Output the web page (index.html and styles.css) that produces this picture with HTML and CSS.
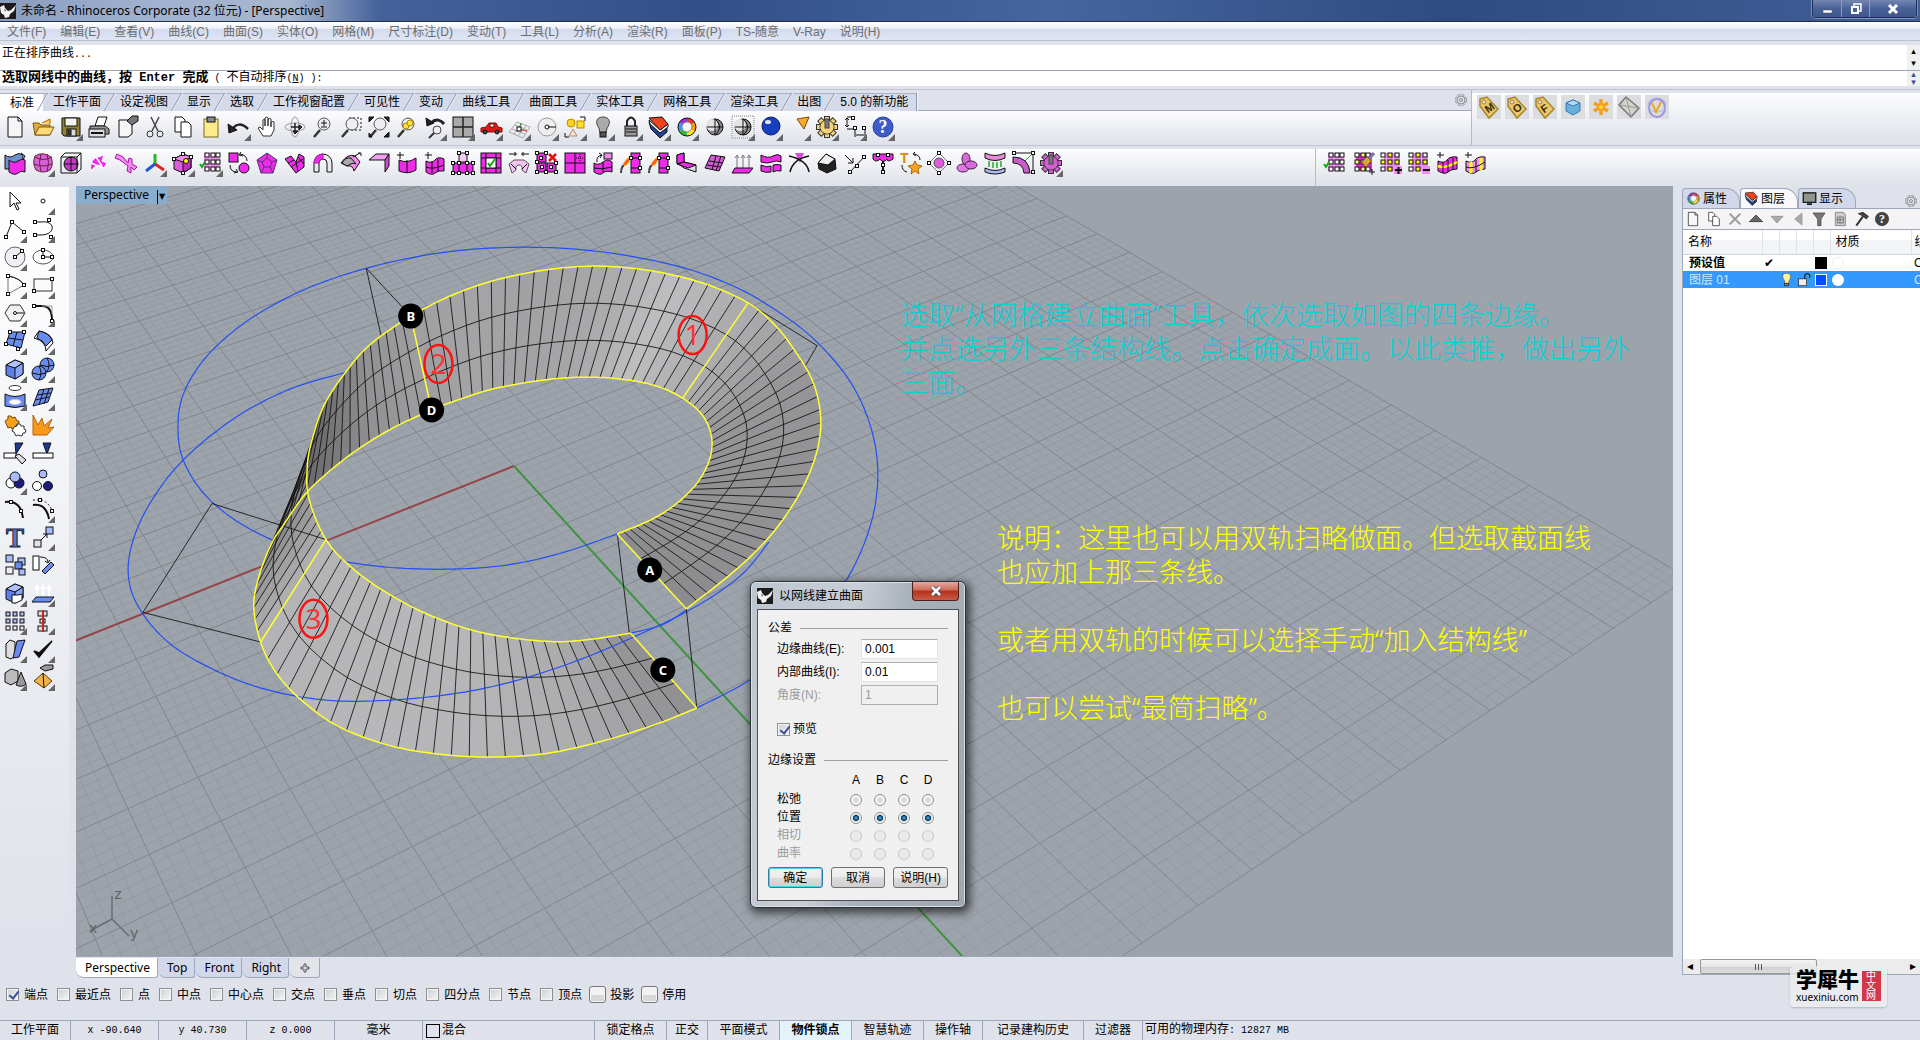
FILE: index.html
```html
<!DOCTYPE html>
<html lang="zh-CN">
<head>
  <meta charset="UTF-8">
  <title>未命名 - Rhinoceros Corporate (32 位元) - [Perspective]</title>
  <link rel="stylesheet" href="styles.css">
</head>
<body>
  <header class="titlebar">
    <svg class="logo" viewBox="0 0 16 16"><rect width="16" height="16" fill="#1b1b1b"/><path d="M0 4l4-2 1 3 3 3 3-1 5-5-2 6-4 3-1 3-4 1-1-3-3-2z" fill="#f2f2f2"/><path d="M4 6l2 1-1 2z" fill="#555"/></svg>
    <h1>未命名 - Rhinoceros Corporate (32 位元) - [Perspective]</h1>
    <div class="window-buttons">
      <button aria-label="最小化"><svg viewBox="0 0 12 12"><rect x="2" y="7" width="9" height="3" fill="#fff" stroke="#444" stroke-width=".5"/></svg></button>
      <button aria-label="还原"><svg viewBox="0 0 12 12"><path d="M4 3V1h7v7H9" fill="none" stroke="#fff" stroke-width="1.5"/><rect x="2" y="4" width="6" height="6" fill="none" stroke="#fff" stroke-width="2"/></svg></button>
      <button class="wide" aria-label="关闭"><svg viewBox="0 0 12 12"><path d="M2 2l8 8M10 2l-8 8" stroke="#fff" stroke-width="3"/></svg></button>
    </div>
  </header>

  <nav class="menu">
    <a href="#">文件(F)</a><a href="#">编辑(E)</a><a href="#">查看(V)</a><a href="#">曲线(C)</a><a href="#">曲面(S)</a><a href="#">实体(O)</a><a href="#">网格(M)</a><a href="#">尺寸标注(D)</a><a href="#">变动(T)</a><a href="#">工具(L)</a><a href="#">分析(A)</a><a href="#">渲染(R)</a><a href="#">面板(P)</a><a href="#">TS-随意</a><a href="#">V-Ray</a><a href="#">说明(H)</a>
  </nav>

  <section class="command">
    <div class="history"><span>正在排序曲线<small>...</small></span><i class="spin"><b>▴</b><b>▾</b></i></div>
    <div class="prompt"><span><strong>选取网线中的曲线，按<span class="key"> Enter </span>完成</strong><small> ( </small>不自动排序<small>(<u>N</u>) ):</small></span><i class="spin blue"><b>▴</b><b>▾</b></i></div>
  </section>

  <section class="dock-row first">
    <div class="dock grow">
      <div class="ribbon-tabs">
        <button class="on">标准</button><button>工作平面</button><button>设定视图</button><button>显示</button><button>选取</button><button>工作视窗配置</button><button>可见性</button><button>变动</button><button>曲线工具</button><button>曲面工具</button><button>实体工具</button><button>网格工具</button><button>渲染工具</button><button>出图</button><button class="last">5.0 的新功能</button>
        <svg class="gear" viewBox="0 0 14 14"><circle cx="7" cy="7" r="5.5" stroke-dasharray="3 1.3"/><circle cx="7" cy="7" r="4"/><circle cx="7" cy="7" r="1.5"/></svg>
      </div>
      <div class="tools" id="standardTools"></div>
    </div>
    <div class="dock side-top"><div class="tools tiles" id="vrayTools"></div></div>
  </section>

  <section class="dock-row second">
    <div class="dock grow"><div class="tools" id="tsTools"></div></div>
    <div class="dock side-bottom"><div class="tools" id="selectTools"></div></div>
  </section>

  <main>
    <aside class="toolbox" id="toolbox"></aside>

    <section class="workspace">
      <div class="viewport">
        <svg class="scene" id="scene"></svg>
        <button class="view-title">Perspective<span>▼</span></button>

        <p class="note cyan">选取“从网格建立曲面”工具，依次选取如图的四条边缘。
并点选另外三条结构线。点击确定成面。以此类推，做出另外
三面。</p>
        <p class="note yellow">说明：这里也可以用双轨扫略做面。但选取截面线
也应加上那三条线。

或者用双轨的时候可以选择手动“加入结构线”

也可以尝试“最简扫略”。</p>

        <form class="dialog">
          <div class="dialog-title">
            <svg class="logo" viewBox="0 0 16 16"><rect width="16" height="16" fill="#1b1b1b"/><path d="M0 4l4-2 1 3 3 3 3-1 5-5-2 6-4 3-1 3-4 1-1-3-3-2z" fill="#f2f2f2"/><path d="M4 6l2 1-1 2z" fill="#555"/></svg>
            <h2>以网线建立曲面</h2>
            <button type="button" class="close" aria-label="关闭"><svg viewBox="0 0 12 12"><path d="M2 2l8 8M10 2l-8 8" stroke="#445" stroke-width="4"/><path d="M2 2l8 8M10 2l-8 8" stroke="#fff" stroke-width="2.5"/></svg></button>
          </div>
          <div class="dialog-body">
            <h3>公差</h3>
            <div class="field"><label for="edge">边缘曲线(E):</label><input type="text" id="edge" value="0.001"></div>
            <div class="field"><label for="inner">内部曲线(I):</label><input type="text" id="inner" value="0.01"></div>
            <div class="field off"><label for="angle">角度(N):</label><input type="text" id="angle" value="1" disabled></div>
            <label class="preview"><input type="checkbox" checked>预览</label>
            <h3>边缘设置</h3>
            <table class="edges">
              <thead><tr><td></td><th>A</th><th>B</th><th>C</th><th>D</th></tr></thead>
              <tbody id="edgeRows"></tbody>
            </table>
            <div class="actions">
              <button type="button" class="default">确定</button>
              <button type="button">取消</button>
              <button type="button">说明(H)</button>
            </div>
          </div>
        </form>
      </div>
      <div class="view-tabs">
        <button class="on">Perspective</button><button>Top</button><button>Front</button><button>Right</button><button class="add" aria-label="新增"><svg viewBox="0 0 10 10"><path d="M4 1h2v3h3v2H6v3H4V6H1V4h3z" fill="none" stroke="#555"/></svg></button>
      </div>
    </section>

    <aside class="panel">
      <div class="panel-tabs">
        <button><i data-icon="wheel"></i>属性</button>
        <button class="on"><i data-icon="layers"></i>图层</button>
        <button><i data-icon="monitor"></i>显示</button>
        <svg class="gear" viewBox="0 0 14 14"><circle cx="7" cy="7" r="5.5" stroke-dasharray="3 1.3"/><circle cx="7" cy="7" r="4"/><circle cx="7" cy="7" r="1.5"/></svg>
      </div>
      <div class="panel-tools" id="panelTools"></div>
      <div class="layer-list">
        <table>
          <thead><tr><th class="name">名称</th><th></th><th></th><th></th><th></th><th class="mat">材质</th><th class="cut">线型</th></tr></thead>
          <tbody>
            <tr class="current"><td>预设值</td><td class="tick">✔</td><td></td><td></td><td><i class="swatch black"></i></td><td><i class="ball faint"></i></td><td class="cut">Continuous</td></tr>
            <tr class="selected"><td>图层 01</td><td></td><td><i data-icon="lamp"></i></td><td><i data-icon="unlock"></i></td><td><i class="swatch"></i></td><td><i class="ball"></i></td><td class="cut">Continuous</td></tr>
          </tbody>
        </table>
      </div>
      <div class="scrollbar"><span>◂</span><div class="thumb"><b></b></div><span class="right">▸</span></div>
      <div class="watermark">
        <div><strong>学犀牛</strong><small>xuexiniu.com</small></div>
        <em>中文网</em>
      </div>
    </aside>
  </main>

  <section class="osnap">
    <label><input type="checkbox" checked>端点</label>
    <label><input type="checkbox">最近点</label>
    <label><input type="checkbox">点</label>
    <label><input type="checkbox">中点</label>
    <label><input type="checkbox">中心点</label>
    <label><input type="checkbox">交点</label>
    <label><input type="checkbox">垂点</label>
    <label><input type="checkbox">切点</label>
    <label><input type="checkbox">四分点</label>
    <label><input type="checkbox">节点</label>
    <label><input type="checkbox">顶点</label>
    <label class="push"><input type="checkbox">投影</label>
    <label class="push"><input type="checkbox">停用</label>
  </section>

  <footer class="status">
    <span class="plane">工作平面</span><span class="coord mono">x -90.640</span><span class="coord mono">y 40.730</span><span class="coord mono">z 0.000</span><span class="coord">毫米</span><span class="layer"><i></i>混合</span><span class="four">锁定格点</span><span class="two">正交</span><span class="four">平面模式</span><span class="four active">物件锁点</span><span class="four">智慧轨迹</span><span class="three">操作轴</span><span class="six">记录建构历史</span><span class="three">过滤器</span><span class="memory">可用的物理内存<small>: 12827 MB</small></span>
  </footer>

  <script src="script.js"></script>
</body>
</html>
```
FILE: styles.css
```css
* {
  box-sizing: border-box;
}

body {
  margin: 0;
  min-height: 100vh;
  display: flex;
  flex-direction: column;
  background: #dfe2ea;
  color: #000;
  font-family: "Liberation Sans", "Noto Sans CJK SC", sans-serif;
  font-size: 12px;
  line-height: 16px;
  overflow: hidden;
}

button, input {
  font: inherit;
  color: inherit;
}

button {
  border: 0;
  padding: 0;
  background: none;
}

h1, h2, h3, p {
  margin: 0;
  font-weight: normal;
}

i, em {
  font-style: normal;
}

svg {
  display: block;
}

a {
  color: inherit;
  text-decoration: none;
}

/* title bar */
.titlebar {
  height: 22px;
  display: flex;
  align-items: center;
  padding-right: 3px;
  background: linear-gradient(90deg, #8a9cbc 0, #9fb2d0 150px, #a7b6cf 290px, #44619a 380px, #324f88 700px, #46659f 1050px, #2f4b80 1450px, #415f98 100%);
  border-bottom: 1px solid #1f2c4c;
}

.logo {
  width: 16px;
  height: 16px;
}

.titlebar h1 {
  flex: 1;
  margin-left: 5px;
  font-family: "Noto Sans", "Noto Sans CJK SC", sans-serif;
  font-size: 12px;
}

.window-buttons {
  display: flex;
  align-self: flex-start;
  border: 1px solid #1f2f55;
  border-top: 0;
  border-radius: 0 0 4px 4px;
  box-shadow: 0 0 0 1px #7f92b8;
}

.window-buttons button {
  width: 28px;
  height: 17px;
  display: flex;
  align-items: center;
  justify-content: center;
  background: linear-gradient(#7487b0, #4a6298 50%, #3d568e);
}

.window-buttons button + button {
  border-left: 1px solid #8a9cc0;
}

.window-buttons .wide {
  width: 47px;
}

.window-buttons svg {
  width: 12px;
  height: 12px;
}

/* menu and command line */
.menu {
  height: 19px;
  display: flex;
  gap: 14px;
  padding-left: 7px;
  line-height: 21px;
  color: #6d6d6d;
  background: linear-gradient(#fff, #eef1f9 35%, #d4dbee 40%, #dfe5f5);
  border-bottom: 1px solid #b9c0d2;
}

.command {
  margin-top: 4px;
  background: #fff;
  font-family: "Liberation Mono", "Noto Sans CJK SC", monospace;
}

.command small {
  font-size: 10px;
  white-space: pre;
}

.history, .prompt {
  display: flex;
  justify-content: space-between;
}

.history {
  height: 26px;
  padding-left: 2px;
  line-height: 18px;
  border-bottom: 1px solid #9ea6b8;
}

.prompt {
  height: 15px;
  line-height: 13px;
  padding-left: 2px;
}

.prompt strong {
  font-size: 13px;
}

.prompt .key {
  font-size: 12px;
}

.spin {
  width: 13px;
  display: flex;
  flex-direction: column;
  justify-content: space-around;
  background: #f0f0f0;
}

.spin b {
  font: 9px/7px "DejaVu Sans", sans-serif;
  text-align: center;
}

.spin.blue {
  color: #33539c;
}

/* toolbars */
.dock-row {
  display: flex;
}

.first {
  margin-top: 3px;
  height: 57px;
  border-top: 1px solid #bfc4cf;
  border-bottom: 1px solid #bfc4cf;
}

.second {
  padding-top: 3px;
  height: 40px;
}

.dock {
  display: flex;
  flex-direction: column;
}

.grow {
  flex: 1;
}

.side-top {
  flex: none;
  width: 449px;
  padding-top: 3px;
  border-left: 1px solid #b3bacb;
}

.side-bottom {
  flex: none;
  width: 605px;
  border-left: 1px solid #b3bacb;
}

.ribbon-tabs {
  display: flex;
  height: 21px;
  padding-top: 3px;
  border-bottom: 1px solid #9ea8bc;
}

.ribbon-tabs button {
  position: relative;
  height: 18px;
  padding: 0 9px 0 10px;
  line-height: 17px;
  background: #d5daea;
  border-top: 1px solid #a9b1c4;
}

.ribbon-tabs button::after {
  content: "";
  position: absolute;
  z-index: 1;
  right: 0;
  top: -1px;
  width: 1px;
  height: 18px;
  background: #8f98ac;
  transform: skewX(-30deg);
  box-shadow: 1px 0 0 #f2f4f9;
}

.ribbon-tabs .on {
  height: 19px;
  background: #fff;
}

.ribbon-tabs .last::after {
  transform: none;
}

.gear {
  width: 14px;
  height: 14px;
  margin-left: auto;
  margin-right: 3px;
  fill: none;
  stroke: #8b8b8b;
}

.tools {
  flex: 1;
  display: flex;
  align-items: flex-start;
  padding: 2px 0 0 1px;
  background: linear-gradient(#fdfdfe, #e0e3ea 90%);
}

.second .tools {
  padding-top: 0;
}

.tool {
  flex: none;
  width: 28px;
  height: 28px;
  padding: 1px 2px;
}

.side-top .tools, .side-bottom .tools {
  padding-left: 5px;
}

.tiles {
  gap: 4px;
}

.tiles .tool {
  width: 24px;
  height: 24px;
  padding: 0;
  background: #dcdde0;
}

.tool svg {
  width: 24px;
  height: 24px;
  overflow: visible;
}

.tool text {
  stroke: none;
}

/* main area */
main {
  flex: 1;
  display: flex;
}

.toolbox {
  flex: none;
  width: 69px;
  margin: 1px 7px 23px 0;
  padding-left: 1px;
  display: grid;
  grid-template-columns: 28px 28px;
  grid-auto-rows: 28px;
  align-content: start;
  background: linear-gradient(#fff, #e2e5ec 85%, #dfe2ea);
}

.workspace {
  flex: 1;
  display: flex;
  flex-direction: column;
}

.viewport {
  flex: 1;
  position: relative;
  overflow: hidden;
  background: #9da3ab;
}

.scene {
  position: absolute;
  width: 100%;
  height: 100%;
}

.view-title {
  position: absolute;
  left: 0;
  top: 0;
  height: 18px;
  padding-left: 8px;
  background: #8aadcc;
  font-family: "Noto Sans", sans-serif;
}

.view-title span {
  display: inline-block;
  margin-left: 8px;
  padding: 0 2px 0 1px;
  border-left: 1px solid #000;
  font: 8px/14px "DejaVu Sans", sans-serif;
}

.note {
  position: absolute;
  white-space: pre;
  font: 300 27px/34px "Noto Sans", "Noto Sans CJK SC", sans-serif;
}

.cyan {
  left: 825px;
  top: 112px;
  color: #0ccfd6;
}

.yellow {
  left: 921px;
  top: 335px;
  color: #ff0;
}

.grid-minor {
  stroke: #949aa2;
}

.grid-major {
  stroke: #83858c;
}

.mesh {
  stroke: #111;
  stroke-opacity: 0.85;
  fill: none;
}

.rail {
  stroke: #ff3;
  stroke-width: 1.5;
  fill: none;
}

.circle {
  stroke: #2450f0;
  stroke-width: 1.2;
  fill: none;
}

.dot-label {
  font: bold 13px "Noto Sans", sans-serif;
  fill: #fff;
  text-anchor: middle;
}

.mark {
  font: 28px "Noto Sans", sans-serif;
  fill: #f33;
  text-anchor: middle;
}

.axis-label {
  font: 14px "Liberation Mono", monospace;
  fill: #5c5e62;
}

/* dialog */
.dialog {
  position: absolute;
  left: 674px;
  top: 395px;
  width: 216px;
  padding: 0 6px 6px;
  border: 1px solid #2b2f36;
  border-radius: 6px;
  background: linear-gradient(100deg, #bdc5cf, #c8ced6 40%, #a8b0ba 60%, #9fa7b1);
  box-shadow: 0 0 0 1px #dde2e8 inset, 2px 3px 9px 2px rgba(0,0,0,0.6);
}

.dialog-title {
  height: 27px;
  display: flex;
  align-items: center;
}

.dialog-title h2 {
  flex: 1;
  margin-left: 6px;
  font-size: 12px;
}

.close {
  align-self: flex-start;
  width: 47px;
  height: 19px;
  display: flex;
  align-items: center;
  justify-content: center;
  border: 1px solid #51201b;
  border-top: 0;
  border-radius: 0 0 4px 4px;
  background: linear-gradient(#e5a79c, #cf6a5a 45%, #b5301c 50%, #cb5b45);
}

.close svg {
  width: 12px;
  height: 12px;
}

.dialog-body {
  padding: 10px 10px 12px;
  border: 1px solid #4a4f58;
  background: #f0f0f0;
}

.dialog h3 {
  display: flex;
  align-items: center;
  gap: 8px;
  font-size: 12px;
  line-height: 16px;
}

.dialog h3::after {
  content: "";
  flex: 1;
  height: 1px;
  background: #a0a0a0;
}

.field {
  display: flex;
  align-items: center;
  justify-content: space-between;
  padding: 0 10px 0 9px;
  margin-top: 3px;
}

.field input {
  width: 77px;
  height: 20px;
  padding: 0 3px;
  border: 1px solid #e2e3ea;
  border-top-color: #abadb3;
  background: #fff;
}

.off {
  color: #9b9b9b;
}

.off input {
  border-color: #afafaf;
  background: #f0f0f0;
}

.preview {
  display: flex;
  align-items: center;
  gap: 3px;
  margin: 16px 0 15px 9px;
}

input[type=checkbox] {
  appearance: none;
  position: relative;
  width: 13px;
  height: 13px;
  margin: 0;
  border: 1px solid #8e8f8f;
  background: linear-gradient(135deg, #cbcfd5, #f6f6f6);
  box-shadow: inset 0 0 0 1px #f4f4f4;
}

input[type=checkbox]:checked::after {
  content: "";
  position: absolute;
  left: 4px;
  top: 0;
  width: 4px;
  height: 8px;
  border: solid #3c4f9c;
  border-width: 0 2px 2px 0;
  transform: rotate(38deg);
}

.edges {
  width: 100%;
  margin-top: 2px;
  border-collapse: collapse;
}

.edges th, .edges td {
  width: 24px;
  height: 18px;
  padding: 0;
  line-height: 16px;
  font-weight: normal;
  text-align: center;
}

.edges thead td, .edges tbody th {
  width: auto;
  padding-left: 9px;
  text-align: left;
}

.edges tr > :last-child {
  width: 32px;
  padding-right: 8px;
}

.edges thead td, .edges thead th {
  height: 20px;
}

.edges input {
  appearance: none;
  display: block;
  width: 12px;
  height: 12px;
  margin: 2px auto 0;
  border: 1px solid #8e8f8f;
  border-radius: 50%;
  background: radial-gradient(#d8dade 25%, #f8f8f8 60%);
}

.edges input:checked {
  background: radial-gradient(#2a9ad0 10%, #0c3350 38%, #f4f4f4 52%);
}

.edges input:disabled {
  border-color: #c4c4c4;
  background: #ebebeb;
}

.actions {
  display: flex;
  gap: 8px;
  margin-top: 5px;
}

.actions button {
  flex: 1;
  height: 21px;
  border: 1px solid #707070;
  border-radius: 3px;
  white-space: nowrap;
  background: linear-gradient(#f2f2f2, #ebebeb 50%, #dddddd 50%, #cfcfcf);
}

.actions .default {
  border-color: #2c7fa8;
  box-shadow: inset 0 0 0 1px #47d3f5;
}

/* viewport tabs */
.view-tabs {
  display: flex;
  height: 22px;
  padding-top: 1px;
  border-top: 1px solid #9ea8bc;
  font-family: "Noto Sans", sans-serif;
}

.view-tabs button {
  position: relative;
  height: 20px;
  padding: 0 7px 0 9px;
  line-height: 18px;
  background: #d2d8ea;
  border: solid #9ea8bc;
  border-width: 0 1px 1px 0;
  border-radius: 0 0 3px 8px;
}

.view-tabs .on {
  background: #fff;
}

.view-tabs .add {
  width: 31px;
  padding-left: 11px;
  background: #e2e4ea;
}

.add svg {
  width: 10px;
  height: 10px;
}

/* layer panel */
.panel {
  position: relative;
  flex: none;
  width: 238px;
  margin: 0 0 3px 9px;
  display: flex;
  flex-direction: column;
}

.panel-tabs {
  display: flex;
  align-items: flex-end;
  height: 22px;
}

.panel-tabs button {
  display: flex;
  align-items: center;
  gap: 2px;
  height: 20px;
  width: 58px;
  padding-left: 3px;
  border: 1px solid #9ea8bc;
  border-bottom: 0;
  border-radius: 4px 14px 0 0;
  background: #d2d8ea;
  white-space: nowrap;
}

.panel-tabs .on {
  background: #f8f8fa;
}

.panel-tabs i svg {
  width: 15px;
  height: 15px;
}

.panel-tabs .gear {
  margin-right: 2px;
}

.panel-tools {
  display: flex;
  height: 22px;
  border: solid #9ea8bc;
  border-width: 1px 0 1px 1px;
  background: #f4f4f6;
}

.panel-tools .tool {
  width: 21px;
  height: 20px;
  padding: 2px;
}

.panel-tools svg {
  width: 16px;
  height: 16px;
}

.layer-list {
  flex: 1;
  border-left: 1px solid #9ea8bc;
  background: #fff;
  overflow: hidden;
}

.layer-list table {
  width: 100%;
  table-layout: fixed;
  border-collapse: collapse;
}

.layer-list th, .layer-list td {
  width: 17px;
  height: 17px;
  padding: 0;
  text-align: left;
  font-weight: normal;
  line-height: 16px;
}

.layer-list th {
  height: 24px;
  border-right: 1px solid #e0e2e6;
  border-bottom: 1px solid #d0d4da;
  background: linear-gradient(#fff 40%, #f3f4f6 45%);
}

.layer-list .name {
  width: 79px;
  padding-left: 5px;
}

.layer-list .mat {
  width: 81px;
  padding-left: 5px;
}

.layer-list .cut {
  width: 9px;
  padding-left: 3px;
  overflow: hidden;
  white-space: nowrap;
}

.layer-list td:first-child {
  padding-left: 6px;
}

.current td:first-child {
  font-weight: bold;
}

.layer-list .tick {
  padding-left: 2px;
  font-family: "DejaVu Sans", sans-serif;
}

.selected {
  color: #cfe8ff;
  background: #3399ff;
}

.layer-list td svg {
  width: 15px;
  height: 15px;
}

.swatch {
  display: block;
  width: 12px;
  height: 12px;
  margin-left: 2px;
  border: 1px solid #fff;
  background: #0050ff;
}

.swatch.black {
  border-color: #000;
  background: #000;
}

.ball {
  display: block;
  width: 12px;
  height: 12px;
  margin-left: 2px;
  border-radius: 50%;
  background: #fff;
}

.faint {
  border: 1px solid #eee;
}

.scrollbar {
  display: flex;
  height: 16px;
  padding: 0 4px;
  border: solid #9ea8bc;
  border-width: 0 0 1px 1px;
  background: #ececec;
  line-height: 15px;
}

.scrollbar .right {
  margin-left: auto;
}

.thumb {
  width: 117px;
  height: 15px;
  margin-left: 7px;
  padding-top: 4px;
  border: 1px solid #979797;
  border-radius: 2px;
  background: linear-gradient(#f4f4f4, #e6e6e6 50%, #cfcfcf 50%, #dcdcdc);
}

.thumb b {
  display: block;
  width: 8px;
  height: 6px;
  margin: 0 auto;
  background: repeating-linear-gradient(90deg, #555 0 1px, transparent 1px 3px);
}

.watermark {
  position: absolute;
  right: 33px;
  bottom: -32px;
  display: flex;
  align-items: center;
  gap: 3px;
  padding: 2px 6px 4px;
  border-radius: 4px;
  background: rgba(236,238,240,0.8);
  box-shadow: 0 1px 2px rgba(0,0,0,0.2);
}

.watermark strong, .watermark small {
  display: block;
}

.watermark strong {
  font-size: 21px;
  line-height: 23px;
  font-weight: 900;
}

.watermark small {
  font: 10px/12px "Noto Sans", sans-serif;
}

.watermark em {
  width: 19px;
  padding: 0 4px;
  background: #d23848;
  color: #fff;
  font-size: 10px;
  line-height: 10px;
}

/* bottom bars */
.osnap {
  display: flex;
  gap: 9px;
  height: 42px;
  padding: 8px 0 0 6px;
}

.osnap label {
  display: flex;
  align-items: center;
  gap: 5px;
  height: 17px;
}

.osnap .push {
  gap: 4px;
  margin-left: -2px;
}

.osnap .push input {
  width: 17px;
  height: 17px;
  border: 1px solid #777;
  border-radius: 3px;
  background: linear-gradient(#f2f2f2 50%, #d8d8d8 50%);
}

.status {
  display: flex;
  height: 20px;
  border-top: 1px solid #9ea8bc;
  line-height: 19px;
}

.status span {
  border-right: 1px solid #9ea8bc;
  text-align: center;
}

.mono, .memory {
  font-family: "Liberation Mono", "Noto Sans CJK SC", monospace;
}

.mono, .memory small {
  font-size: 10px;
}

.plane { width: 71px; }
.coord { width: 88px; }
.two { width: 41px; }
.three { width: 59px; }
.four { width: 72px; }
.six { width: 101px; }

.status .layer {
  width: 172px;
  display: flex;
  align-items: center;
  padding-left: 3px;
}

.layer i {
  width: 14px;
  height: 14px;
  margin-right: 2px;
  border: 1px solid #000;
}

.active {
  background: #e4f2fc;
  font-weight: bold;
}

.status .memory {
  border-right: 0;
  padding-left: 2px;
}
```
FILE: script.js
```js
// ---------- icons, all on a 24 x 24 grid ----------
const PINK = '#ee2be6', ROSE = '#f08cf0', BLUE = '#6a8cf0', SKY = '#a9bcf7';

const path = (d, fill = 'none', stroke = '#111', w = 1) =>
  `<path d="${d}" fill="${fill}" stroke="${stroke}" stroke-width="${w}"/>`;
const circ = (x, y, r, fill = 'none', stroke = '#111') =>
  `<circle cx="${x}" cy="${y}" r="${r}" fill="${fill}" stroke="${stroke}"/>`;
const rect = (x, y, w, h, fill = 'none', stroke = '#111') =>
  `<rect x="${x}" y="${y}" width="${w}" height="${h}" fill="${fill}" stroke="${stroke}"/>`;
const knots = (...pts) => pts.map(p => rect(p[0] - 1.5, p[1] - 1.5, 3, 3, '#fff')).join('');

function lattice(cols, rows, fill, first = '#fff', mid = '#fff') {
  let s = rect(5, 2, 16, 18, fill, 'none');
  cols.forEach((x, i) => rows.forEach((y, j) => {
    s += rect(x, y, 4, 4, i === 1 || j === 1 ? mid : first);
  }));
  return s;
}

const cube = (fill, top, side) =>
  path('M3 8l9-5 8 3v11l-8 5-9-4z', fill) + path('M3 8l9-5 8 3-8 5z', top) + path('M12 11l8-5v11l-8 5z', side);
const lens = path('M9 15l-6 7', 'none', '#333', 2.5) + circ(13, 9, 6, '#eceef0', '#555');
const page = path('M5 2h10l4 4v16H5z', '#f6f6f6') + path('M15 2v4h4');
const gearShape = (fill) => {
  let s = '';
  for (let a = 0; a < 360; a += 45) s += `<rect x="9.5" y="1.5" width="5" height="6" fill="${fill}" stroke="#333" transform="rotate(${a} 12 12)"/>`;
  return s + circ(12, 12, 7, fill, '#333') + circ(12, 12, 6, fill, fill) + rect(10, 4, 4, 9, '#777', '#444');
};
const ball = (light, dark) =>
  circ(12, 12, 8, dark) + circ(9, 10, 6, light, 'none') + path('M12 4v16M4 12h16M12 4c6 5 6 11 0 16');
const tag = (t) => path('M3 4l7-2 11 12-9 9L3 11z', '#e9c76a', '#a8862c', 1.5) + circ(7, 7, 2, '#dcdde0', '#a8862c') +
  `<text x="8" y="17" font-size="11" font-weight="bold" font-family="Liberation Sans" fill="#3a2c08" transform="rotate(-35 12 13)">${t}</text>`;
const wheel = ['#e33', '#f90', '#fe2', '#3b3', '#39f', '#93c'].map((c, i) =>
  `<path d="M12 12V3A9 9 0 0 1 19.8 7.5z" fill="${c}" transform="rotate(${i * 60} 12 12)"/>`).join('') +
  circ(12, 12, 5, '#f4f5f8', '#888') + circ(12, 12, 9);
const layers = path('M2 7l11 11 7-6v5l-7 6L4 14z', '#1c3f98') + path('M2 5l11 10 8-6v3l-8 6L3 9z', '#fff') + path('M2 3l13-1 6 7-8 6z', '#f0421c');

const icons = {
  page, layers, wheel,
  open: path('M2 8h6l2 2h9v10H4z', '#e0aa38', '#7a5510') + path('M4 20l4-8h15l-4 8z', '#ffd978', '#7a5510') + path('M11 8l8-4v5', '#ffc64a', '#a07010'),
  save: path('M3 3h18v18H5l-2-2z', '#8f8238') + rect(6, 3, 12, 8, '#f4f4ee') + rect(8, 14, 9, 7, '#ddd') + rect(9, 15, 3, 5, '#444'),
  print: path('M8 11l3-9h9l-3 9z', '#fff') + path('M3 11h15l4 3v5H3z', '#999') + rect(2, 14, 16, 8, '#ddd') + path('M4 18h12', 'none', '#111', 2),
  note: path('M4 5h13v14l-4 3H4z', '#f6f6f6') + path('M12 6l5-5h6v5l-6 4z', '#777'),
  cut: path('M8 2l7 14M16 2L9 16', 'none', '#444', 1.5) + circ(7, 19, 3, 'none', '#333') + circ(17, 19, 3, 'none', '#333'),
  copy: path('M4 2h7l3 3v12H4z', '#fff') + path('M10 7h7l3 3v12H10z', '#fff'),
  paste: rect(5, 4, 14, 18, '#fdeb8e', '#7a6a1c') + rect(8, 2, 8, 5, '#888'),
  undo: path('M5 15C9 8 15 8 21 14', 'none', '#222', 2.5) + path('M1 9l1 9 8-3z', '#222'),
  hand: path('M8 21L3 13l2-1 3 3V5q2-2 2 0v6-8q2-2 3 0v8-7q2-1 3 0v8-5q2-1 3 0v8l-3 6z', '#fff', '#333'),
  orbit: `<ellipse cx="12" cy="12" rx="10" ry="4" fill="none" stroke="#999"/><ellipse cx="12" cy="12" rx="4" ry="10" fill="none" stroke="#999"/>` + path('M8 12h8M12 8v8', 'none', '#222', 1.5) + path('M16 10v5l3-3zM10 16h5l-3 3z', '#333'),
  zoom: lens + path('M10 8h6M13 5v6M10 12h6'),
  zoomWin: `<rect x="10" y="3" width="12" height="12" fill="none" stroke="#111" stroke-dasharray="2 2"/>` + lens,
  zoomAll: lens + path('M2 2h5L2 7zM22 2v5l-5-5zM22 22h-5l5-5zM2 22v-4l3 4z', '#222'),
  zoomSel: lens + circ(11, 11, 3, '#ffe23c', '#a80') + circ(15, 8, 3, '#ffe23c', '#a80'),
  zoomBack: path('M8 8c5-5 10-3 13 1', 'none', '#222', 3) + path('M3 3l1 8 7-3z', '#222') + circ(14, 15, 4, '#eee', '#444') + path('M11 18l-5 5', 'none', '#333', 2),
  four: rect(2, 2, 20, 20, '#aaa') + path('M12 2v20M2 12h20', 'none', '#222', 1.5),
  car: path('M2 13l5-1 3-4h7l2 4 4 1v4H2z', '#dd1a1a', '#8a0d0d') + rect(11, 9, 4, 3, '#fff', '#711') + circ(6, 17, 2, '#444') + circ(18, 17, 2, '#444'),
  cplane: path('M2 17l8-10 13 5-7 11zM5 14l13 5M8 10l12 5M7 19l8-10M11 21l8-10', 'none', '#aaa') + path('M12 14l8 2', 'none', '#c22') + path('M12 14l2-6', 'none', '#292') + rect(10, 12, 4, 4, '#fff'),
  compass: circ(12, 12, 9, '#eee', '#999') + circ(12, 12, 2, '#fff') + path('M13 12h8'),
  shapes: circ(8, 8, 4, '#ffd21f', '#b80') + rect(14, 6, 7, 7, '#ffe21f', '#b80') + path('M6 21l4-7 4 7z', '#f4e4d4', '#b86') + path('M17 2h5v4M2 18v4h4'),
  bulb: path('M12 2c7 0 8 6 4 11l-1 5H9l-1-5C4 8 5 2 12 2z', '#aaa', '#444') + rect(9, 17, 6, 5, '#555'),
  lock: path('M8 11V6q4-7 8 0v5', 'none', '#222', 2) + rect(6, 11, 12, 10, '#999') + path('M7 14h10M7 17h10'),
  sphere: ball('#e4e4e4', '#888'),
  sphereTex: `<rect x="1" y="1" width="22" height="22" fill="none" stroke="#bbb" stroke-width="2" stroke-dasharray="1 1"/>` + ball('#e4e4e4', '#888'),
  marble: circ(12, 11, 9, '#1740c0', '#0a1d66') + `<ellipse cx="9" cy="7" rx="3" ry="2" fill="#dfe8ff"/>`,
  spot: path('M10 4l12-2-5 12z', '#f7a928', '#7a4a08'),
  gear: gearShape('#f5d17a'),
  gearPink: gearShape('#d65fd6'),
  dims: path('M4 3v9M2 5l2-2 2 2M2 10l2 2 2-2M9 2H4M4 14h8v8M22 11v11M13 20h8') + knots([10, 3], [12, 13], [21, 13]),
  help: circ(12, 12, 10, '#3d5ccc', '#2a3f99') + '<text x="12" y="18" font-size="18" font-weight="bold" font-family="Liberation Serif" text-anchor="middle" fill="#fff">?</text>',

  extrude: path('M2 4q5 4 10 0 4-3 8 0v14H2z', '#6c93cf') + path('M6 9q5 4 9 1t7-1v12q-4-2-7 1t-9-1z', PINK) + path('M18 2l4 3-2 4'),
  tsBall: path('M4 5q8-5 16 1 3 7-1 13-7 4-14 0-4-7-1-14z', '#d75fd8', '#624') + path('M4 6q8 5 17 0M10 3q-3 8 0 18M16 3q3 8 0 18M3 13q9 4 18 0', 'none', '#624'),
  cage: circ(12, 13, 7, '#c43bc6') + path('M5 13h14M12 6v14') + path('M2 6h16v16H2zM2 6l4-4h16v16l-4 4M22 2l-4 4'),
  wave: path('M4 20q-2-8 4-13l9-3-2 6 5 2-3 5-5-3q-5 1-8 6z', PINK, '#fff') + path('M4 12l12 5M9 6l6 9', 'none', '#fff', 1.5),
  branch: path('M2 3l6 3 5 6 1-5 3 1v5l5 3-3 3-3-3v6l-4-2 1-5-8-6-5-2z', ROSE, '#a1a'),
  axes: path('M12 13V3', 'none', '#2b2', 3) + path('M12 13l9 6', 'none', '#d22', 3) + path('M12 13l-9 7', 'none', '#25d', 3),
  knotCube: cube('#e05ae0', ROSE, '#c22bc2') + knots([3, 8], [12, 3], [20, 6], [12, 22]) + circ(15, 10, 2.5, '#ff0'),
  checkNet: lattice([6, 12, 17], [2, 9, 16], ROSE) + path('M1 13l2 3 3-5', 'none', '#1a1', 2),
  swap: rect(2, 2, 9, 9, PINK) + circ(17, 17, 5, PINK) + path('M13 3q7 1 7 7M3 14q0 7 7 7M14 1l-2 3 4 1M9 18l2 3-4 1'),
  penta: path('M12 2l10 7-4 13H6L2 9z', PINK, '#537') + path('M12 7l5 4-2 5H9l-2-5zM12 2v5M22 9l-5 2M18 22l-3-6M6 22l3-6M2 9l5 2', 'none', '#537'),
  planes: path('M2 8l6-3 5 6 3-8 5 3v10l-8 6z', PINK) + path('M5 12l6-3M8 16l12-8M13 11l2 9M15 6l6 7'),
  arch: path('M3 21V12a9 9 0 0 1 18 0v9h-5v-9a4 4 0 0 0-8 0v9z', '#e8e8ee') + path('M3 12a9 9 0 0 1 9-9v5q-4 0-4 4z', PINK, '#b1b'),
  bend: path('M2 12q7-10 14-7l5 6-6 9q-1-6-7-5z', ROSE) + path('M14 6l7-4M19 2h3v3') + path('M3 12q3-6 9-5l5 6q-3-2-9 2z', '#aaa'),
  sheetBend: path('M2 9l7-6h13l-4 6z', '#f0a0f0') + path('M18 9l4-6v12l-4 6z', '#d04bd0'),
  plusTube: path('M4 9q8 4 17-2v12q-8 5-17 1z', PINK) + path('M12 9v13', 'none', '#111', 1) + path('M2 4h7M5 1v7'),
  plusSheet: path('M3 10q6 3 9-1t9-1v12q-6-1-9 2t-9-1z', PINK) + path('M9 10v12M15 8v13M3 16q7 3 18-2') + path('M2 4h7M5 1v7'),
  crossNet: rect(8, 2, 8, 9, '#f6c8f4') + rect(2, 12, 20, 10, PINK) + path('M8 12v10M16 12v10') + knots([8, 2], [16, 2], [2, 12], [8, 12], [16, 12], [22, 12], [2, 22], [8, 22], [16, 22], [22, 22]),
  checkBox: rect(2, 2, 20, 20, PINK) + path('M7 2v20M17 2v20M2 7h20M2 17h20') + rect(7, 7, 10, 10, '#fff') + path('M9 12l2 3 5-7', 'none', '#1a1', 2),
  fan: path('M2 13l5-4h10l5 4-3 9-4-3q1-5-3-5t-3 5l-4 3z', '#f3c3f1', '#555') + path('M2 3h8M22 3h-8M8 1v4M16 1v4M4 13l5 5M20 13l-5 5'),
  delNet: rect(2, 2, 9, 9, PINK) + rect(2, 12, 9, 9, PINK) + rect(12, 12, 9, 9, PINK) + knots([2, 2], [6, 7], [11, 2], [2, 11], [2, 21], [7, 16], [11, 21], [16, 16], [21, 21], [21, 12]) + path('M14 3l7 7M21 3l-7 7', 'none', '#d11', 2.5),
  quad: rect(2, 2, 20, 20, PINK) + path('M12 2v20M2 12h20') + `<path d="M17 3v8M13 7h8" stroke="#111" stroke-dasharray="1 1"/>`,
  foldUp: path('M3 12q4 3 9-1t9 0v10q-6-2-9 1t-9-1z', PINK) + path('M12 11v10M3 17q8 2 18-1') + path('M6 11q-1-6 5-7M8 2l3 2-2 3') + rect(13, 2, 8, 6, ROSE),
  torch: rect(12, 2, 9, 20, PINK) + path('M12 7h9M12 17h9') + path('M2 22q0-8 6-10', 'none', '#444', 2) + path('M4 13q4-6 7-7 0 6-5 9z', '#f52', '#fb0') + knots([12, 7], [21, 7], [21, 17]),
  sheets: path('M2 4l7-2v9l12 3v7L9 17l-7-5z', '#ddd') + path('M2 4l7-2v9l-7 2zM2 13l7-2 12 3-8 3z', PINK),
  rhomb: path('M8 4l14 2-6 14-14-3z', '#d45bd4') + path('M13 5L9 19M18 5l-5 15M6 10l14 2M4 14l14 2'),
  arrowsUp: path('M6 17V5M12 17V5M18 17V5M4 7l2-3 2 3M10 7l2-3 2 3M16 7l2-3 2 3', 'none', '#777') + path('M4 17h18l-4 5H1z', PINK),
  wavy: path('M2 4q7 4 12 1t8 0v6q-5-2-9 0t-11 0zM2 14q6 3 10 1v6q-5 1-10-1zM14 14q4-1 8 0v6q-5-1-8 1z', PINK),
  crossCurve: path('M8 2h9l-4 10z', '#d64ed6', 'none') + path('M2 5q18 4 20 16M22 5Q6 8 3 21', 'none', '#111', 1.5),
  hex: path('M3 12l8-9 9 5 1 10-9 4-8-4z', '#222') + path('M3 12l8-9 9 5-7 6z', '#eee'),
  snapDots: path('M2 4l8 8M10 7v5H5M7 21L22 5', 'none', '#111', 1) + knots([7, 21], [14, 15], [21, 6]),
  magnet: path('M2 8V3h20v5q-6 4-6 0-4 5-7 0-4 4-7 0z', PINK) + path('M12 10v12', 'none', '#111', 2) + knots([7, 4], [17, 4], [12, 14], [12, 21]),
  star: '<text x="1" y="12" font-size="14" font-weight="bold" font-family="Liberation Sans" fill="#d98a18">T</text>' + path('M16 10l2 4 5 1-4 3 1 5-4-3-4 3 1-5-4-3 5-1z', '#f5a41c', '#a86a08') + path('M15 3q6 1 6 6M3 14q0 6 5 7M16 1l-2 2 3 2'),
  diamond: path('M12 2l10 10-10 10L2 12z', 'none', '#777') + circ(12, 12, 5, '#dc5bdc', '#555') + knots([12, 2], [22, 12], [12, 22], [2, 12]),
  shell: `<ellipse cx="11" cy="8" rx="4" ry="6" fill="#d66ad6" stroke="#424"/><ellipse cx="8" cy="17" rx="6" ry="4" fill="#e07ae0" stroke="#424"/><ellipse cx="16" cy="14" rx="6" ry="4" fill="#d66ad6" stroke="#424"/>`,
  lofts: path('M2 2q10 5 20 0v5q-10 5-20 0z', '#e88ad8') + path('M2 17q10 5 20 0v4q-10 4-20 0z', SKY) + path('M6 10v6M10 11v6M14 11v6M18 10v6', 'none', '#2a2', 1.5),
  tube: path('M2 6q16 0 17 16h-6Q12 12 2 12z', '#c85fc8') + path('M2 2h20v20', 'none', '#111') + knots([3, 2], [22, 2], [22, 21]) + path('M14 10l6-6', 'none', '#2a2'),

  netBrush: lattice([4, 10, 15], [2, 9, 16], PINK, '#fff', '#ff6') + path('M11 11l5-5 4 4-5 6z', '#d9a63a', '#a86a08') + path('M18 8l5-6', 'none', '#77a', 3) + path('M18 21h6M21 18v6'),
  netPlus: lattice([2, 9, 16], [2, 9, 16], ROSE, '#fff', '#ff0') + rect(15, 15, 8, 8, ROSE, 'none') + path('M16 19h7M19.5 16v7', 'none', '#111', 2),
  netMinus: lattice([2, 9, 16], [2, 9, 16], ROSE, '#fff', '#ff0') + rect(15, 15, 8, 8, ROSE, 'none') + path('M16 19h7', 'none', '#111', 2),
  loopA: path('M3 10q6 3 9-1t10-3v12q-6 0-9 3t-10-1z', PINK) + path('M3 15q7 3 19-4', 'none', '#ff0', 2.5) + path('M8 11v11M13 9v12M18 7v12M2 4h7M5 1v6'),
  loopB: path('M3 10q6 3 9-1t10-3v12q-6 0-9 3t-10-1z', ROSE) + path('M8 11v11M18 7v12', 'none', '#ff0', 3) + path('M13 9v12M3 16q7 3 19-5M2 4h7M5 1v6'),

  tagM: tag('M'), tagO: tag('O'), tagF: tag('F'),
  iceCube: path('M5 8l7-3 7 3v8l-7 4-7-4z', '#6aaede', '#3b78ad') + path('M5 8l7-3 7 3-7 3z', '#b8dcf2', '#3b78ad'),
  burst: path('M12 4v16M5 8l14 8M19 8L5 16', 'none', '#f0a01c', 3.5) + circ(12, 12, 2, '#ffd040', 'none'),
  plane: path('M9 2l13 11-8 9L2 10z', '#d4d2ca', '#777', 1.5) + path('M9 2l5 20M2 10l20 3', 'none', '#999'),
  vee: `<ellipse cx="12" cy="13" rx="8" ry="9" fill="none" stroke="#9a93dc" stroke-width="2"/><ellipse cx="12" cy="10" rx="9" ry="7" fill="none" stroke="#b2acec"/>` + path('M7 8l4 9 5-10', 'none', '#e8a820', 2),

  arrow: path('M7 3v15l4-4 3 7 2-1-3-6h5z', '#fff'),
  point: circ(12, 12, 2, '#fff'),
  polyline: path('M3 20L9 5l12 10', 'none', '#111', 1) + knots([3, 20], [9, 5], [21, 15]),
  curve: path('M4 5h6c15-2 15 13 0 13H4', 'none', '#111', 1) + knots([4, 5], [18, 3], [4, 18], [20, 20]),
  circle: circ(12, 12, 10, '#eceef2', '#666') + path('M12 12l7-6') + knots([12, 12], [19, 6]),
  ellipse: '<ellipse cx="12" cy="12" rx="10" ry="7" fill="none" stroke="#555"/>' + path('M12 5v7h9') + knots([12, 5], [12, 12], [21, 12]),
  arc: path('M5 3Q17 5 21 12L5 21z', 'none', '#777') + path('M5 3Q17 5 21 12') + knots([5, 3], [21, 12], [5, 21]),
  rectangle: rect(3, 6, 18, 12, 'none', '#333') + knots([21, 6], [3, 18]),
  polygon: path('M2 12l5-8h10l5 8-5 8H7z', '#f0f0f0', '#333') + path('M12 12h9') + circ(12, 12, 1.5, '#fff'),
  fillet: path('M3 5h8q10 0 10 14', 'none', '#111', 2) + path('M11 5h10v8', 'none', '#999') + knots([3, 5], [21, 20]),
  patch: path('M7 3h15l-4 16-15-4z', BLUE) + path('M14 3l-4 14M5 9l15 2') + knots([7, 3], [21, 3], [3, 15], [15, 20]),
  sweep: path('M3 9l5-7q13 2 14 12l-7 8q0-10-12-13z', '#f4f4f8') + path('M8 2q10 2 13 9l-6 6q-3-6-9-8z', BLUE),
  box: cube('#5b7fe8', '#b0c2fb', '#8aa4f4'),
  spheres: circ(16, 8, 7, BLUE) + circ(8, 16, 7, BLUE) + path('M16 1q4 7 0 14M9 8q7 3 14 0M8 9q4 7 0 14M1 16q7 3 14 0'),
  ringSurf: '<ellipse cx="12" cy="3" rx="6" ry="2.5" fill="#fff" stroke="#333"/>' + path('M2 9q10 5 20 0v12q-10 3-20 0z', BLUE) + '<ellipse cx="12" cy="17" rx="6" ry="2.5" fill="#fff" stroke="#ccd"/>',
  mesh: path('M8 5l14-2-5 14-15 4z', BLUE) + path('M13 4L8 20M18 4l-5 15M6 10l14-2M4 15l14-3'),
  puzzle: path('M2 8l3-2 0-3 3 0 1 2 3-1 2 4 2 0 0 3-3 1 0 3-4 1-1-2-3 1z', '#f7a21c', '#7a4a08') + path('M11 14l3-1 0-2 3 0 1 2 3 0 0 3 2 1-1 3-2 0-1 3-4-1-2 1-2-4-2-1z', '#fff', '#333'),
  blast: path('M2 22V2l5 10 4-7 2 8 8-7-4 9 6-1-7 8z', '#f79a1c', '#b8600c'),
  trim: path('M12 2h8l-7 11z', '#203a8a', '#112') + rect(1, 12, 12, 5, '#fff') + path('M12 15l4-2 7 6-4 4z', '#ddd'),
  split: path('M12 2h8l-4 11z', '#203a8a', '#112') + rect(2, 12, 20, 5, '#fff'),
  union: circ(8, 14, 5, '#fff', '#111') + circ(16, 14, 5, '#1c1c80') + circ(12, 8, 5, SKY),
  dots: circ(12, 5, 4, SKY) + circ(6, 17, 4.5, '#fff') + circ(17, 17, 4.5, '#1c1c80'),
  curveEnd: path('M2 5q16-2 18 16', 'none', '#111', 2) + knots([8, 5], [18, 14]),
  offset: path('M2 8q13-2 16 14', 'none', '#111', 2) + '<path d="M2 3h9q9 4 11 14" fill="none" stroke="#111" stroke-dasharray="2 2"/>' + knots([9, 3], [21, 14]),
  text: '<text x="12" y="22" font-size="27" font-weight="bold" font-family="Liberation Serif" text-anchor="middle" style="fill:#5577dc;stroke:#223;stroke-width:1">T</text>',
  move: rect(3, 15, 7, 7, '#e4e4e4') + rect(15, 2, 7, 7, SKY) + path('M10 15l6-6M12 9h4v4'),
  groups: rect(3, 2, 7, 7, SKY) + rect(15, 5, 7, 7, SKY) + rect(12, 9, 7, 7, BLUE) + rect(3, 14, 7, 7, '#eee') + rect(16, 16, 6, 6, SKY),
  rotate: rect(2, 3, 6, 14, '#fff') + path('M9 4q8 0 8 5M14 8l3 2 2-3') + path('M11 18l9-9 3 3-9 9z', BLUE),
  boxCut: cube('#5b7fe8', '#b0c2fb', '#8aa4f4') + path('M9 14h6l4-1v6l-6 3H9z', '#fff'),
  arrowsBlue: path('M6 17V6M12 17V6M18 17V6M4 8l2-3 2 3M10 8l2-3 2 3M16 8l2-3 2 3', 'none', '#fff', 2) + path('M5 16h18l-4 5H1z', BLUE),
  array: [3, 10, 17].map(x => [3, 10, 17].map(y => rect(x, y, 4, 4, y === 17 ? '#eee' : SKY)).join('')).join(''),
  align: rect(7, 2, 9, 5, '#ddd') + rect(9, 10, 5, 4, '#ddd') + rect(7, 17, 9, 5, '#ddd') + path('M12 1v22', 'none', '#c22', 2),
  books: path('M3 7l4-4 5 2v14l-4 3-5-2z', '#ddd') + path('M14 4l8-1-6 17-6 1z', BLUE),
  check: path('M3 14l5 6L21 4 8 16z', '#111', '#111', 1.5),
  solids: path('M2 8l6-4 7 2v10l-7 4-6-3z', '#bbb') + path('M18 7l5 12q-4 4-10 1z', '#999'),
  pyramid: path('M3 16l9-8 9 8-8 7z', '#f0b24c', '#5a3a08') + path('M12 8l1 15') + path('M9 3l5-3h8v4l-8 2z', '#999'),

  copyPage: path('M4 2h6l3 3v10H4z', '#fff') + path('M10 8h6l4 4v10H10z', '#fff'),
  del: path('M4 4l16 16M20 4L4 20', 'none', '#999', 3),
  up: path('M2 16l10-10 10 10z', '#666', '#222'),
  down: path('M3 8h18l-9 10z', '#aaa', '#888'),
  left: path('M18 3v18L7 12z', '#aaa', '#888'),
  filter: path('M3 3h18l-6 9v10h-5V12z', '#777', '#333'),
  sheet: path('M5 2h12l3 3v17H5z', '#ccc', '#666') + path('M8 9h9v9H8zM12 9v9M8 13h9', 'none', '#555'),
  hammer: path('M5 22L15 8', 'none', '#333', 3) + path('M8 4l7-2 8 6-3 4-6-5z', '#444'),
  helpGray: circ(12, 12, 10, '#444', '#333') + '<text x="12" y="18" font-size="18" font-weight="bold" font-family="Liberation Serif" text-anchor="middle" fill="#fff">?</text>',
  monitor: rect(2, 3, 20, 15, '#8f9690') + path('M2 3h20v15H2z', 'none', '#222', 2) + path('M8 21h8', 'none', '#222', 3),
  lamp: path('M12 2c8 0 8 7 4 12v4H9v-4C5 9 4 2 12 2z', '#fdf79a', '#554') + rect(9, 18, 6, 4, '#888'),
  unlock: path('M14 11V5q4-5 8 0v4', 'none', '#222', 2) + rect(4, 11, 13, 11, '#eee')
};

const flag = '<path d="M24 19v7h-7z" fill="#666"/>';

function drawIcon(name, flagged) {
  return `<svg viewBox="0 0 24 24">${icons[name]}${flagged ? flag : ''}</svg>`;
}

// a trailing * adds the fly-out corner
function fillTools(id, names) {
  document.getElementById(id).innerHTML = names.split(' ').map(n => {
    const name = n.replace('*', '');
    return `<button class="tool" aria-label="${name}">${drawIcon(name, n !== name)}</button>`;
  }).join('');
}

fillTools('standardTools', 'page open save* print note cut copy paste undo* hand orbit zoom zoomWin zoomAll zoomSel zoomBack* four* car* cplane* compass* shapes* bulb* lock* layers* wheel* sphere sphereTex* marble* spot* gear* dims* help*');
fillTools('tsTools', 'extrude tsBall* cage wave branch axes* knotCube* checkNet* swap penta planes arch bend sheetBend plusTube plusSheet crossNet checkBox fan delNet quad foldUp torch torch sheets rhomb arrowsUp wavy crossCurve hex snapDots magnet star diamond shell lofts tube gearPink*');
fillTools('vrayTools', 'tagM tagO tagF iceCube burst plane vee');
fillTools('selectTools', 'checkNet netBrush netPlus netMinus loopA loopB');
fillTools('toolbox', 'arrow point* polyline* curve* circle* ellipse* arc* rectangle* polygon* fillet* patch* sweep* box* spheres* ringSurf* mesh* puzzle blast trim split union* dots curveEnd offset* text move* groups rotate boxCut* arrowsBlue* array* align* books* check* solids* pyramid*');
fillTools('panelTools', 'page copyPage del up down left filter sheet hammer helpGray');
document.querySelectorAll('[data-icon]').forEach(el => {
  el.innerHTML = drawIcon(el.dataset.icon);
});

// ---------- edge continuity table ----------
document.getElementById('edgeRows').innerHTML = ['松弛', '位置', '相切', '曲率'].map((row, i) => {
  const cells = ['A', 'B', 'C', 'D'].map(edge =>
    `<td><input type="radio" name="edge${edge}" aria-label="${row} ${edge}"${i === 1 ? ' checked' : ''}${i > 1 ? ' disabled' : ''}></td>`).join('');
  return `<tr class="${i > 1 ? 'off' : ''}"><th>${row}</th>${cells}</tr>`;
}).join('');

// ---------- construction plane grid ----------
const out = [];

function project(x, y) {
  const a = 0.2133 * x, b = 0.3124 * y, w = 1 + a - b;
  return [(3757 * a + 682 * b + 438) / w, (-1041 * a + 945 * b + 280) / w];
}

function line(p, q, attrs) {
  out.push(`<line x1="${p[0].toFixed(1)}" y1="${p[1].toFixed(1)}" x2="${q[0].toFixed(1)}" y2="${q[1].toFixed(1)}" ${attrs}/>`);
}

for (const major of [false, true]) {
  for (let i = -70; i <= 70; i++) {
    if ((i % 5 === 0) !== major) continue;
    const cls = `class="${major ? 'grid-major' : 'grid-minor'}"`;
    line(project(i / 70, -1), project(i / 70, 1), cls);
    line(project(-1, i / 70), project(1, i / 70), cls);
  }
}
line(project(-1, 0), project(0, 0), 'stroke="#96464a" stroke-width="2"');
line(project(0, 0), project(0, 1), 'stroke="#3f933f" stroke-width="2"');

// ---------- ribbon surface ----------
const place = p => [p[0] * 0.523, p[1] * 0.357 + 33];

// Catmull-Rom through the knots, 10 samples per span
function spline(raw) {
  const k = raw.map(place), pts = [];
  for (let i = 0; i < k.length - 1; i++) {
    const a = k[Math.max(i - 1, 0)], b = k[i], c = k[i + 1], d = k[Math.min(i + 2, k.length - 1)];
    for (let s = 0; s < 10; s++) {
      const t = s / 10;
      pts.push([0, 1].map(n => 0.5 * (2 * b[n] + (c[n] - a[n]) * t +
        (2 * a[n] - 5 * b[n] + 4 * c[n] - d[n]) * t * t + (3 * b[n] - a[n] - 3 * c[n] + d[n]) * t * t * t)));
    }
  }
  pts.push(k[k.length - 1]);
  return pts;
}

const mix = (a, b, t) => [a[0] + (b[0] - a[0]) * t, a[1] + (b[1] - a[1]) * t];
const trace = pts => 'M' + pts.map(p => p[0].toFixed(1) + ' ' + p[1].toFixed(1)).join('L');
const stroke = (pts, cls) => out.push(`<path class="${cls}" d="${trace(pts)}"/>`);

// n + 1 evenly spaced points between two knots
function even(pts, from, to, n) {
  const part = pts.slice(from * 10, to * 10 + 1), len = [0];
  for (let i = 1; i < part.length; i++) len.push(len[i - 1] + Math.hypot(part[i][0] - part[i - 1][0], part[i][1] - part[i - 1][1]));
  const res = [];
  for (let i = 0; i <= n; i++) {
    const want = len[len.length - 1] * i / n;
    let j = 1;
    while (j < len.length - 1 && len[j] < want) j++;
    const t = (want - len[j - 1]) / (len[j] - len[j - 1]);
    res.push(mix(part[j - 1], part[j], t));
  }
  return res;
}

stroke(spline([[1187,1370],[1290,1290],[1375,1190],[1442,1080],[1492,960],[1524,830],[1533,700],[1518,575],[1480,455],[1417,345],[1345,262],[1260,190],[1150,132],[1000,91],[850,79],[700,94],[555,138],[430,202],[325,288],[248,388],[205,492],[195,590],[207,682],[250,778],[325,862],[430,930],[550,968],[680,981],[810,972],[925,937],[1035,882]]), 'circle');

const railP = spline([[1167,1092],[1235,1015],[1290,945],[1340,865],[1385,765],[1415,660],[1424,560],[1410,460],[1375,370],[1335,295],[1285,235],[1200,180],[1100,145],[1000,132],[900,142],[800,172],[720,213],[640,272],[560,355],[510,440],[475,520],[455,600],[443,680],[445,780],[478,898],[530,980],[600,1052],[680,1112],[780,1160],[900,1183],[980,1178],[1060,1160]]);
const railQ = spline([[1035,882],[1100,842],[1150,795],[1190,735],[1212,670],[1215,610],[1198,550],[1160,502],[1110,468],[1050,450],[980,443],[900,450],[800,475],[720,512],[680,535],[600,590],[520,665],[445,760],[400,850],[372,915],[348,1010],[340,1090],[353,1185],[380,1265],[425,1340],[500,1420],[600,1475],[700,1500],[800,1507],[900,1497],[1000,1465],[1100,1420],[1187,1370]]);

const strips = [
  { p: [0, 10], q: [0, 7], n: 29, tones: [140, 145, 146, 150, 176] },
  { p: [10, 17], q: [7, 14], n: 24, tones: [172, 190, 168, 162, 164, 158] },
  { p: [17, 24], q: [14, 22], n: 27, tones: [158, 145, 112, 100, 145, 180] },
  { p: [24, 31], q: [22, 32], n: 27, tones: [180, 183, 182, 172, 140] }
];

strips.forEach(s => {
  const a = even(railP, s.p[0], s.p[1], s.n), b = even(railQ, s.q[0], s.q[1], s.n);
  for (let i = 0; i < s.n; i++) {
    const f = i / s.n * (s.tones.length - 1), j = Math.floor(f);
    const g = Math.round(s.tones[j] + (s.tones[j + 1] - s.tones[j]) * (f - j));
    const c = `rgb(${g},${g},${g + 2})`;
    out.push(`<path d="${trace([a[i], a[i + 1], b[i + 1], b[i]])}Z" fill="${c}" stroke="${c}" stroke-width=".5"/>`);
  }
  for (let i = 1; i < s.n; i++) line(a[i], b[i], 'class="mesh"');
  stroke(a.map((p, i) => mix(p, b[i], 1 / 3)), 'mesh');
  stroke(a.map((p, i) => mix(p, b[i], 2 / 3)), 'mesh');
});

stroke(spline([[515,430],[410,476],[305,556],[205,675],[142,795],[107,910],[101,1010],[125,1100],[180,1190],[260,1260],[345,1310],[440,1341],[540,1351],[680,1338],[810,1305],[940,1247],[1060,1175],[1180,1090],[1270,1000],[1325,905]]), 'circle');
stroke(spline([[1060,1160],[1120,1137],[1167,1095]]), 'circle');

[[[640,272],[555,138],[583,325]], [[478,898],[260,797],[128,1102],[353,1185]], [[1285,235],[1417,355],[1395,410]], [[1035,882],[1058,1160]], [[1167,1092],[1187,1370]]]
  .forEach(l => stroke(l.map(place), 'mesh'));

stroke(railP, 'rail');
stroke(railQ, 'rail');
[[[1035,882],[1167,1092]], [[1285,235],[1160,502]], [[640,272],[680,535]], [[478,898],[353,1185]], [[1060,1160],[1187,1370]]]
  .forEach(l => stroke(l.map(place), 'rail'));

[['A', 1097, 983], ['B', 640, 272], ['C', 1122, 1263], ['D', 680, 535]].forEach(d => {
  const [x, y] = place([d[1], d[2]]);
  out.push(`<circle cx="${x}" cy="${y}" r="12.5"/><text class="dot-label" x="${x}" y="${y + 5}">${d[0]}</text>`);
});
[['1', 1179, 325], ['2', 693, 406], ['3', 454, 1120]].forEach(m => {
  const [x, y] = place([m[1], m[2]]);
  out.push(`<ellipse cx="${x}" cy="${y}" rx="14" ry="19" fill="none" stroke="#f11" stroke-width="2.5"/><text class="mark" x="${x}" y="${y + 10}">${m[0]}</text>`);
});

// world axes in the corner
out.push('<path d="M36 710v23l-22 12M36 733l17 17" fill="none" stroke="#6a6c72" stroke-width="1.5"/>',
  '<text class="axis-label" x="38" y="713">z</text><text class="axis-label" x="13" y="747">x</text><text class="axis-label" x="54" y="752">y</text>');

document.getElementById('scene').innerHTML = out.join('');
```
